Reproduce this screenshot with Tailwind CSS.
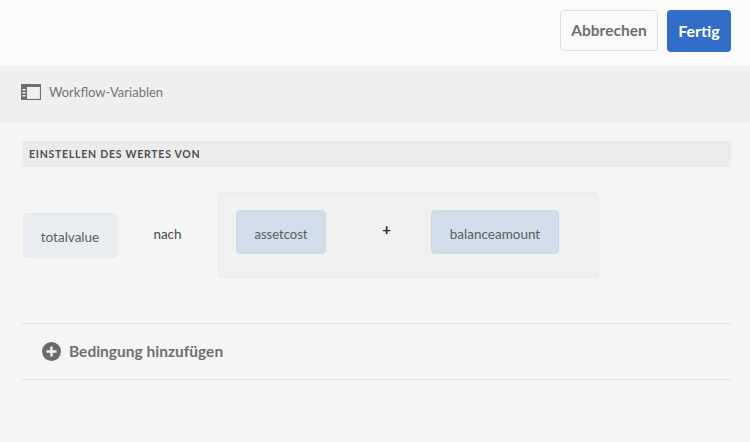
<!DOCTYPE html>
<html lang="en">
<head>
    <meta charset="UTF-8">
    <title>Workflow-Variablen</title>
    <script src="https://cdn.jsdelivr.net/npm/@tailwindcss/browser@4"></script>
</head>
<body class="bg-[#f5f5f5] font-['Lato',sans-serif] w-[750px] h-[442px] overflow-hidden">

    <!-- top bar -->
    <header class="h-[66px] bg-[#fbfbfb] flex items-start justify-end gap-[9px] pt-[10px] pr-[19px]">
        <button class="w-[98px] h-[41px] pt-[1px] bg-[#fafafa] border border-[#dedede] rounded-[4px] text-[15.5px] font-bold text-[#6f6f6f]">Abbrechen</button>
        <button class="w-[64px] h-[42px] bg-[#326ec8] rounded-[4px] text-[16px] font-bold text-white">Fertig</button>
    </header>

    <!-- variables bar -->
    <div class="h-[56px] bg-[#efefef] border-b border-[#e8e8e8] flex items-center gap-[8px] pl-[21px] pb-[3px]">
        <svg width="20" height="16" viewBox="0 0 20 16">
            <rect x="0.5" y="0.5" width="19" height="15" fill="none" stroke="#6e6e6e" stroke-width="1.2"/>
            <rect x="0" y="0" width="20" height="3" fill="#6e6e6e"/>
            <rect x="0" y="0" width="6" height="16" fill="#6e6e6e"/>
            <rect x="1.5" y="5" width="3" height="1.5" fill="#efefef"/>
            <rect x="1.5" y="8" width="3" height="1.5" fill="#efefef"/>
            <rect x="1.5" y="11" width="3" height="1.5" fill="#efefef"/>
        </svg>
        <span class="pt-[2px] text-[13px] text-[#747474]">Workflow-Variablen</span>
    </div>

    <main class="pt-[19px] pl-[22px] pr-[19px]">
        <h2 class="h-[26px] bg-[#ebebeb] flex items-center pl-[7px] pt-[2px] text-[10.5px] font-bold tracking-[0.75px] text-[#4f4f4f]">EINSTELLEN DES WERTES VON</h2>

        <!-- expression row -->
        <div class="flex items-center mt-[25px] h-[86px]">
            <div class="w-[94px] h-[45px] ml-[1px] mt-[1px] bg-[#e9edf2] border border-[#e6e9ee] rounded-[4px] flex items-center justify-center pt-[3px] text-[13.5px] text-[#5c5c5c]">totalvalue</div>
            <span class="w-[101px] pb-[2px] text-center text-[13.5px] text-[#4a4a4a]">nach</span>
            <div class="w-[381px] h-[86px] bg-[#f0f0f0] border border-[#ebebeb] rounded-[4px] flex items-center pl-[17px] pb-[7px]">
                <div class="w-[90px] h-[44px] pt-[6px] bg-[#d2dcea] border border-[#cdd8e8] rounded-[4px] flex items-center justify-center text-[13px] text-[#5c5c5c]">assetcost</div>
                <span class="w-[105px] pl-[16px] text-center text-[15px] font-bold text-[#222] pb-[4px]">+</span>
                <div class="w-[128px] h-[44px] pt-[6px] bg-[#d2dcea] border border-[#cdd8e8] rounded-[4px] flex items-center justify-center text-[13.5px] text-[#5c5c5c]">balanceamount</div>
            </div>
        </div>

        <!-- add condition -->
        <div class="mt-[45px] h-[57px] border-y border-[#dfdfdf] flex items-center gap-[8px] pl-[20px]">
            <svg width="19" height="19" viewBox="0 0 19 19">
                <circle cx="9.5" cy="9.5" r="9.5" fill="#6a6a6a"/>
                <path d="M9.5 4.5v10M4.5 9.5h10" stroke="#f5f5f5" stroke-width="2.4"/>
            </svg>
            <span class="text-[15.5px] font-bold text-[#6f6f6f]">Bedingung hinzufügen</span>
        </div>
    </main>

</body>
</html>
